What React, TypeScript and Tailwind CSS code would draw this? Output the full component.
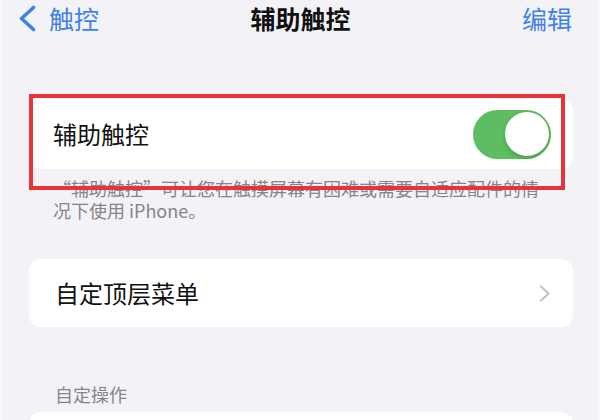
import React from "react";

const font = { fontFamily: '"Noto Sans CJK SC", "Noto Sans", sans-serif' };

const BackChevron = () => (
  <svg width="18" height="27" viewBox="0 0 18 27" fill="none">
    <polyline
      points="15.5,2.5 3.5,13.5 15.5,24.5"
      stroke="#3f82e8"
      strokeWidth="3.6"
      strokeLinecap="round"
      strokeLinejoin="round"
    />
  </svg>
);

const RowChevron = () => (
  <svg width="12" height="17" viewBox="0 0 12 17" fill="none">
    <polyline
      points="2,1.5 9.5,8.5 2,15.5"
      stroke="#c3c3c8"
      strokeWidth="2.2"
      strokeLinecap="round"
      strokeLinejoin="round"
    />
  </svg>
);

const Toggle = () => (
  <div className="flex h-[49px] w-[78px] items-center justify-end rounded-full bg-[#5dbd60] p-[2.5px]">
    <div className="h-[44px] w-[44px] rounded-full bg-white shadow-[0_2px_4px_rgba(0,0,0,0.18)]" />
  </div>
);

export default function App() {
  return (
    <div
      className="h-[420px] w-[600px] overflow-hidden bg-[#f2f2f7] text-[#111]"
      style={font}
    >
      <div className="h-full border-x-[2px] border-[#f7f7fa]">
        {/* nav bar */}
        <div className="grid h-[36px] grid-cols-[1fr_auto_1fr] items-center pl-[16px] pr-[26px]">
          <div className="flex items-center gap-[13px] text-[25px] text-[#3f82e8]">
            <BackChevron />
            <span>触控</span>
          </div>
          <div className="ml-[11px] text-[25px] font-bold">辅助触控</div>
          <div className="text-right text-[25px] text-[#3f82e8]">编辑</div>
        </div>

        {/* assistive touch switch */}
        <div className="relative mt-[63px]">
          <div className="ml-[27px] mr-[25px] flex h-[70px] items-center justify-between rounded-[12px] bg-white pl-[24px] pr-[22px]">
            <span className="text-[24px]">辅助触控</span>
            <Toggle />
          </div>
          <p className="ml-[51px] mt-[8px] w-[492px] text-[18px] leading-[22px] text-[#85858a]">
            “辅助触控”可让您在触摸屏幕有困难或需要自适应配件的情况下使用 iPhone。
          </p>
          <div className="absolute left-[27px] top-[-5px] h-[96px] w-[536px] border-[4.5px] border-[#e8333b]" />
        </div>

        {/* top level menu */}
        <div className="ml-[27px] mr-[25px] mt-[38px] flex h-[68px] items-center justify-between rounded-[12px] bg-white pl-[26px] pr-[22px]">
          <span className="text-[24px]">自定顶层菜单</span>
          <RowChevron />
        </div>

        {/* custom actions */}
        <div className="ml-[53px] mt-[56px] text-[18px] leading-[22px] text-[#85858a]">
          自定操作
        </div>
        <div className="ml-[27px] mr-[25px] mt-[7px] h-[68px] rounded-[12px] bg-white" />
      </div>
    </div>
  );
}
